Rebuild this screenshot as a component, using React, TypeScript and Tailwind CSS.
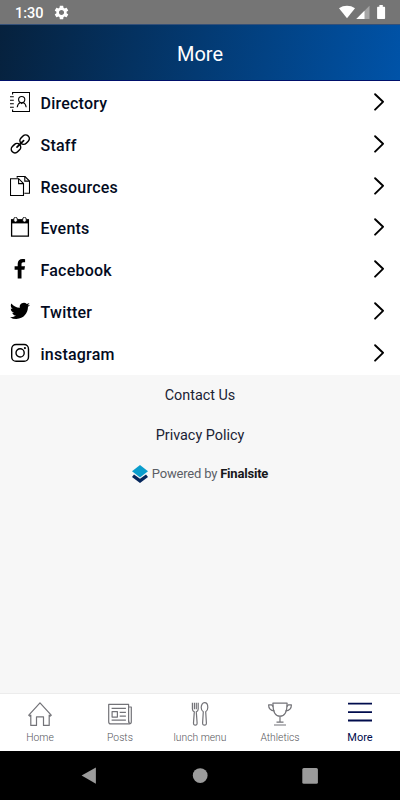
import type { ReactNode } from 'react'

interface MenuItem {
  label: string
  icon: ReactNode
}

interface TabItem {
  label: string
  icon: ReactNode
  active?: boolean
}

function RowIcon({ children }: { children: ReactNode }) {
  return (
    <svg className="w-5 h-5 shrink-0" viewBox="0 0 20 20" fill="none" stroke="#000" strokeWidth="1.1">
      {children}
    </svg>
  )
}

function TabIcon({ children }: { children: ReactNode }) {
  return (
    <svg className="w-6 h-6" viewBox="0 0 24 24" fill="none" stroke="#737378" strokeWidth="1.2" strokeLinejoin="round">
      {children}
    </svg>
  )
}

const menuItems: MenuItem[] = [
  {
    label: 'Directory',
    icon: (
      <RowIcon>
        <path d="M2.6 2.5V.5h17v19h-17v-2" />
        <path d="M0 4.8h3.8M0 8.3h3.8M0 11.8h3.8M0 15.3h3.8" />
        <circle cx="11.7" cy="7.6" r="3.1" />
        <path d="M7.2 15.2c.3-2.6 1.6-4.2 3.2-4.8l1.3 1.2 1.3-1.2c1.6.6 2.9 2.2 3.2 4.8" />
      </RowIcon>
    ),
  },
  {
    label: 'Staff',
    icon: (
      <RowIcon>
        <g transform="rotate(-45 10.3 9.9)" strokeWidth="1.5">
          <rect x="-.9" y="6.2" width="10.2" height="7.4" rx="3.7" />
          <rect x="11.3" y="6.2" width="10.2" height="7.4" rx="3.7" />
          <path d="M5.6 9.9H15" strokeWidth="1.7" strokeLinecap="round" />
        </g>
      </RowIcon>
    ),
  },
  {
    label: 'Resources',
    icon: (
      <RowIcon>
        <path d="M7.2 1.8V.5h7.8l4.5 4.5v12.2h-5.2" />
        <path d="M14.8.5v4.6h4.6" />
        <path d="M.5 2.7h8.2l4.8 4.8v12H.5z" />
        <path d="M8.6 2.8v4.8h4.8" />
      </RowIcon>
    ),
  },
  {
    label: 'Events',
    icon: (
      <RowIcon>
        <path d="M1.6 3h16.8v16.2H1.6z" strokeWidth="1.3" />
        <path d="M1 2.4h18v4H1z" fill="#000" stroke="none" />
        <rect x="3.8" y=".4" width="3.5" height="4.7" rx="1.6" fill="#fff" strokeWidth=".9" />
        <rect x="12.7" y=".4" width="3.5" height="4.7" rx="1.6" fill="#fff" strokeWidth=".9" />
      </RowIcon>
    ),
  },
  {
    label: 'Facebook',
    icon: (
      <RowIcon>
        <path
          d="M7.7 19.6v-8.8H4.6V7.2h3.1V4.8c0-3.2 1.9-4.8 4.7-4.8 1.4 0 2.7.2 2.7.2v3.1h-1.6c-1.5 0-2 .9-2 1.8v2.1H15l-.6 3.6h-2.9v8.8z"
          fill="#000"
          stroke="none"
        />
      </RowIcon>
    ),
  },
  {
    label: 'Twitter',
    icon: (
      <RowIcon>
        <path
          transform="translate(0 -.1) scale(.8333)"
          d="M23.953 4.57a10 10 0 01-2.825.775 4.958 4.958 0 002.163-2.723c-.951.555-2.005.959-3.127 1.184a4.92 4.92 0 00-8.384 4.482C7.69 8.095 4.067 6.13 1.64 3.162a4.822 4.822 0 00-.666 2.475c0 1.71.87 3.213 2.188 4.096a4.904 4.904 0 01-2.228-.616v.06a4.923 4.923 0 003.946 4.827 4.996 4.996 0 01-2.212.085 4.936 4.936 0 004.604 3.417 9.867 9.867 0 01-6.102 2.105c-.39 0-.779-.023-1.17-.067a13.995 13.995 0 007.557 2.209c9.053 0 13.998-7.496 13.998-13.985 0-.21 0-.42-.015-.63A9.935 9.935 0 0024 4.59z"
          fill="#000"
          stroke="none"
        />
      </RowIcon>
    ),
  },
  {
    label: 'instagram',
    icon: (
      <RowIcon>
        <rect x="1.7" y="1.5" width="16.8" height="16.8" rx="4.4" strokeWidth="1.4" />
        <circle cx="10.1" cy="9.9" r="4.1" strokeWidth="1.4" />
        <circle cx="14.9" cy="5.1" r="1.1" fill="#000" stroke="none" />
      </RowIcon>
    ),
  },
]

const tabs: TabItem[] = [
  {
    label: 'Home',
    icon: (
      <TabIcon>
        <path d="M12 .8.8 13.2l1 .9 1-1v10.3h5.7v-8.6h7v8.6h5.7V13.1l1 1 1-.9z" />
      </TabIcon>
    ),
  },
  {
    label: 'Posts',
    icon: (
      <TabIcon>
        <path d="M20.6 20.5V2.4H.7v17.3c0 1.5.9 2.2 2 2.2h18.5c1.3 0 2.1-.8 2.1-2.1V5h-2.7" />
        <path d="M20.6 18.5c0 2 1 2.8 1.6 2.8" />
        <path d="M3.6 6.4h14.3M11.7 10.4h6.2M11.7 14.2h6.2M3.6 18.1h14.3" />
        <path d="M4.1 9.6h5.3v5.5H4.1z" />
      </TabIcon>
    ),
  },
  {
    label: 'lunch menu',
    icon: (
      <TabIcon>
        <path d="M4.4.7v6.2c0 1.8.9 2.5 1.9 3l-.8 11c-.1 1.5.6 2.3 1.8 2.3s1.9-.8 1.8-2.3l-.8-11c1-.5 1.9-1.2 1.9-3V.7M6.4.7v6.6M8.3.7v6.6" />
        <path d="M16.5.7c-1.9 0-3.3 2.1-3.3 4.8 0 2 .8 3.5 2.1 4.2l-.7 11.2c-.1 1.5.6 2.3 1.9 2.3s2-.8 1.9-2.3l-.7-11.2c1.3-.7 2.1-2.2 2.1-4.2 0-2.7-1.4-4.8-3.3-4.8z" />
      </TabIcon>
    ),
  },
  {
    label: 'Athletics',
    icon: (
      <TabIcon>
        <path d="M4.9 1.2h14.2c0 6.8-1.7 13-7.1 13S4.9 8 4.9 1.2z" />
        <path d="M5.1 4.5 3.7 2.9H.6c0 3.1 1.7 5.5 5.8 6M18.9 4.5l1.4-1.6h3.1c0 3.1-1.7 5.5-5.8 6" />
        <path d="M12 14.2v6M8.5 20.2h7M6 23h12" />
      </TabIcon>
    ),
  },
  {
    label: 'More',
    active: true,
    icon: (
      <svg className="w-6 h-6" viewBox="0 0 24 24" stroke="#000c4d" strokeWidth="1.8">
        <path d="M0 1.7h24M0 10.1h24M0 18.5h24" />
      </svg>
    ),
  },
]

function StatusBar() {
  return (
    <div className="h-6 shrink-0 bg-[#757575] flex items-center text-white">
      <span className="ml-[15px] w-7 text-[14.5px] leading-6 font-medium pt-[3px]">1:30</span>
      <svg className="ml-[11px] mt-px w-[15px] h-[15px]" viewBox="1.5 1.5 21 21" fill="#fff">
        <path d="M19.14 12.94c.04-.3.06-.61.06-.94 0-.32-.02-.64-.07-.94l2.03-1.58c.18-.14.23-.41.12-.61l-1.92-3.32c-.12-.22-.37-.29-.59-.22l-2.39.96c-.5-.38-1.03-.7-1.62-.94l-.36-2.54c-.04-.24-.24-.41-.48-.41h-3.84c-.24 0-.43.17-.47.41l-.36 2.54c-.59.24-1.13.57-1.62.94l-2.39-.96c-.22-.08-.47 0-.59.22L2.74 8.87c-.12.21-.08.47.12.61l2.03 1.58c-.05.3-.09.63-.09.94s.02.64.07.94l-2.03 1.58c-.18.14-.23.41-.12.61l1.92 3.32c.12.22.37.29.59.22l2.39-.96c.5.38 1.03.7 1.62.94l.36 2.54c.05.24.24.41.48.41h3.84c.24 0 .44-.17.47-.41l.36-2.54c.59-.24 1.13-.56 1.62-.94l2.39.96c.22.08.47 0 .59-.22l1.92-3.32c.12-.22.07-.47-.12-.61zM12 15.6c-1.98 0-3.6-1.62-3.6-3.6s1.62-3.6 3.6-3.6 3.6 1.62 3.6 3.6-1.62 3.6-3.6 3.6z" />
      </svg>
      <svg className="ml-auto mr-[14px] w-[47px] h-4" viewBox="0 0 47 16" fill="#fff">
        <path d="M0 4.2C4.7.9 11.3.9 16 4.2L8 14.2z" />
        <path d="M30.5 1.7v13.2H17.3z" fill="#a6a6a6" />
        <path d="M25.5 6.7v8.2h-8.2z" />
        <path d="M40.4 1.1h3.4v1.7h1.3c.6 0 1 .4 1 1v10.1c0 .6-.4 1-1 1h-6c-.6 0-1-.4-1-1V3.8c0-.6.4-1 1-1h1.3z" />
      </svg>
    </div>
  )
}

function MenuRow({ label, icon }: MenuItem) {
  return (
    <li className="h-[41.85px] flex items-center pl-2.5 pr-[15px]">
      {icon}
      <span className="ml-[10.5px] mt-[4px] text-base tracking-[0.22px] font-medium text-[#030b1e]">{label}</span>
      <svg className="ml-auto w-3 h-[18px]" viewBox="0 0 12 18" fill="none" stroke="#000" strokeWidth="1.9">
        <path d="M2.1 1.2 10 8.8l-7.9 7.9" strokeLinecap="round" strokeLinejoin="round" />
      </svg>
    </li>
  )
}

function FinalsiteCredit() {
  return (
    <div className="mt-[18px] flex items-center justify-center h-5 text-[13px] tracking-[-0.2px] text-[#5b5e66]">
      <svg className="w-4 h-[18px] mr-1" viewBox="0 0 16 18">
        <path d="m2 9.4 6 4.4 6-4.4L16 12l-8 6-8-6z" fill="#05265b" />
        <path d="m8 0 8 6.2-8 6.2-8-6.2z" fill="#0a9dcc" />
      </svg>
      <span>Powered by</span>
      <span className="ml-[3px] font-bold text-[#17181c]">Finalsite</span>
    </div>
  )
}

function TabBar() {
  return (
    <nav className="h-[58px] shrink-0 bg-white border-t border-[#ececec] grid grid-cols-5 pt-2">
      {tabs.map((tab) => (
        <div key={tab.label} className="flex flex-col items-center">
          {tab.icon}
          {tab.active ? (
            <span className="mt-[5px] text-[11px] leading-[14px] text-[#000c4d]">{tab.label}</span>
          ) : (
            <span className="mt-[5px] text-[10.3px] leading-[14px] font-light text-[#55555a] whitespace-nowrap">
              {tab.label}
            </span>
          )}
        </div>
      ))}
    </nav>
  )
}

function SystemNav() {
  return (
    <div className="h-[49px] shrink-0 bg-black flex justify-center">
      <svg className="w-60 h-[49px]" viewBox="0 0 240 49" fill="#9b9b9b">
        <path d="M1.6 24.6 15.9 16.4v16.4z" />
        <circle cx="120.2" cy="24.6" r="7.4" />
        <rect x="222.3" y="17" width="15.6" height="15.8" rx="1.5" />
      </svg>
    </div>
  )
}

export default function App() {
  return (
    <div className="w-[400px] h-[800px] flex flex-col overflow-hidden bg-[#f7f7f7] font-['Roboto',sans-serif]">
      <StatusBar />
      <header className="h-[57px] shrink-0 flex items-center justify-center bg-[linear-gradient(100deg,#06213d_0%,#0053a8_100%)] border-t border-b border-t-[#345078] border-b-[#00106b]">
        <h1 className="mt-[3px] text-xl text-white">More</h1>
      </header>
      <ul className="shrink-0 bg-white pb-px">
        {menuItems.map((item) => (
          <MenuRow key={item.label} {...item} />
        ))}
      </ul>
      <div className="flex-1 flex flex-col items-center text-[#1a2234] text-[14.4px]">
        <a className="mt-[11px] leading-5">Contact Us</a>
        <a className="mt-5 leading-5">Privacy Policy</a>
        <FinalsiteCredit />
      </div>
      <TabBar />
      <SystemNav />
    </div>
  )
}
